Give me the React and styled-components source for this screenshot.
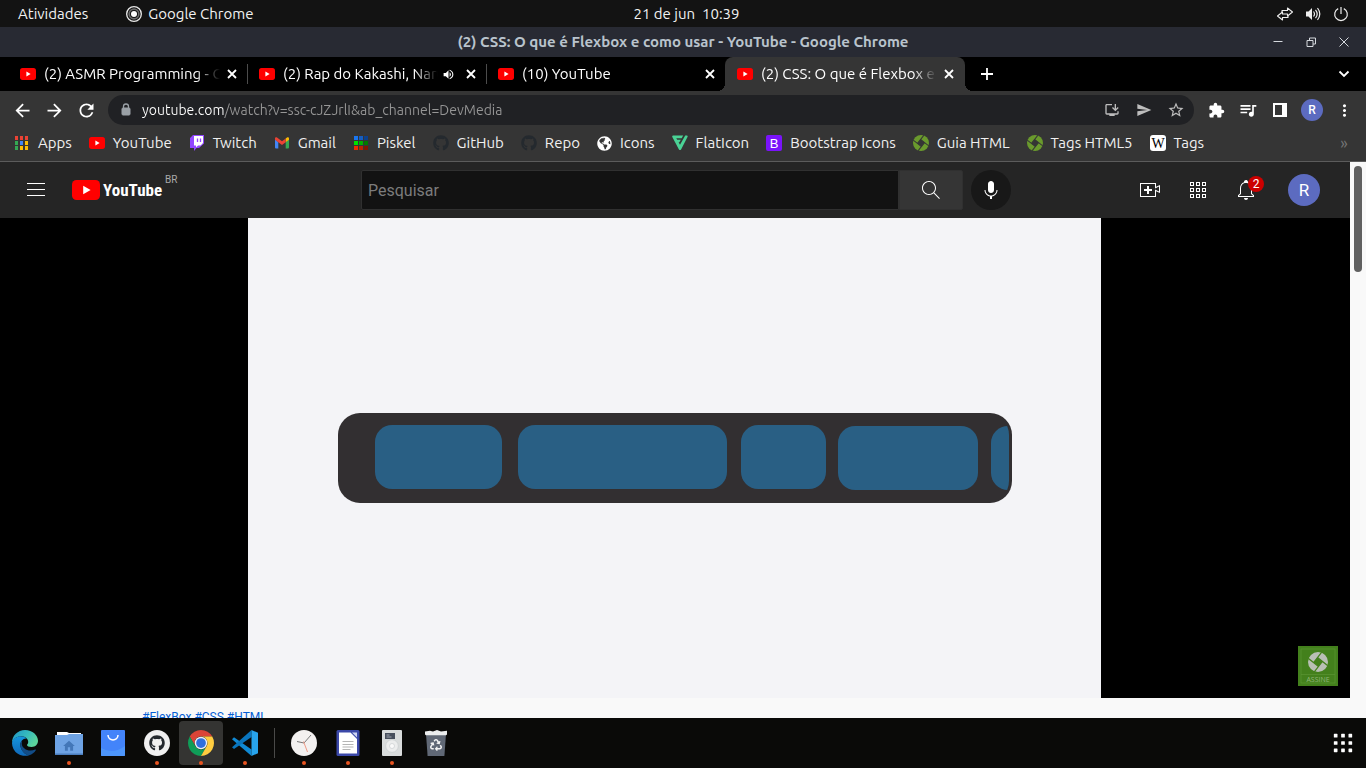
import React from "react";
import styled, { createGlobalStyle, css } from "styled-components";
import { FaGithub, FaGlobeAmericas, FaRecycle } from "react-icons/fa";
import {
  MdArrowBack, MdArrowForward, MdRefresh, MdSend, MdStarOutline,
  MdExtension, MdQueueMusic, MdMoreVert, MdVolumeUp,
  MdInstallDesktop, MdHome,
} from "react-icons/md";

const uiFont = `"Ubuntu", "Noto Sans", "Open Sans", sans-serif`;

const GlobalStyle = createGlobalStyle`
  *, *::before, *::after { box-sizing: border-box; }
  body { margin: 0; background: #000; font-family: ${uiFont}; }
  button, input { font: inherit; color: inherit; margin: 0; }
  a { color: inherit; text-decoration: none; }
  svg { display: block; flex: none; }
`;

const Desktop = styled.div`
  height: 100vh;
  min-height: 480px;
  display: flex;
  flex-direction: column;
  overflow: hidden;
`;

const IconButton = styled.button`
  flex: none;
  display: flex;
  align-items: center;
  justify-content: center;
  width: ${(p) => p.$w || 32}px;
  height: ${(p) => p.$h || 30}px;
  padding: 0;
  border: 0;
  background: none;
  color: ${(p) => p.$color || "#fff"};
  cursor: pointer;
`;

/* ---------- system bar ---------- */

const SystemBar = styled.header`
  flex: none;
  display: grid;
  grid-template-columns: 1fr auto 1fr;
  align-items: center;
  height: 27px;
  padding: 0 11px 0 18px;
  background: #131313;
  color: #f2f2f2;
  font-size: 15px;
  line-height: 20px;
`;

const SystemLeft = styled.div`
  display: flex;
  align-items: center;
  gap: 38px;
`;

const SystemText = styled.button`
  display: flex;
  align-items: center;
  gap: 6px;
  padding: 0;
  border: 0;
  background: none;
  white-space: pre;
`;

const SystemTray = styled.div`
  display: flex;
  justify-content: flex-end;
`;

const TitleBar = styled.div`
  flex: none;
  display: grid;
  grid-template-columns: 1fr auto 1fr;
  align-items: center;
  height: 30px;
  padding: 0 6px;
  background: #282a33;
  color: #b9c3cc;
`;

const WindowTitle = styled.h1`
  grid-column: 2;
  margin: 0;
  font-size: 15px;
  line-height: 20px;
  font-weight: 700;
  white-space: nowrap;
`;

const WindowButtons = styled.div`
  display: flex;
  justify-content: flex-end;
`;

/* ---------- browser chrome ---------- */

const TabStrip = styled.nav`
  flex: none;
  display: flex;
  align-items: center;
  height: 34px;
  padding: 0 6px 0 8px;
  background: #000;
`;

const TabItem = styled.div`
  position: relative;
  flex: 0 1 ${(p) => (p.$active ? 240 : 239)}px;
  min-width: 0;
  display: flex;
  align-items: center;
  gap: 8px;
  height: 34px;
  padding: 0 7px 0 12px;
  color: #fff;
  ${(p) => p.$divider && css`
    &::after {
      content: "";
      position: absolute;
      right: -1px;
      top: 7px;
      width: 1px;
      height: 20px;
      background: #4c4c4c;
    }
  `}
  ${(p) => p.$active && css`
    padding-right: 8px;
    background: #353535;
    border-radius: 8px 8px 0 0;
    &::before, &::after {
      content: "";
      position: absolute;
      bottom: 0;
      width: 8px;
      height: 8px;
    }
    &::before {
      right: 100%;
      background: radial-gradient(circle at 0 0, transparent 8px, #353535 8px);
    }
    &::after {
      left: 100%;
      background: radial-gradient(circle at 100% 0, transparent 8px, #353535 8px);
    }
  `}
`;

const TabLabel = styled.a`
  flex: 1;
  min-width: 0;
  margin-right: -4px;
  overflow: hidden;
  white-space: nowrap;
  font-size: 15px;
  line-height: 20px;
  mask-image: linear-gradient(90deg, #000 calc(100% - 24px), transparent);
`;

const Spacer = styled.div`
  flex: 1;
`;

const Toolbar = styled.div`
  flex: none;
  display: flex;
  align-items: center;
  height: 38px;
  padding: 0 6px;
  background: #353535;
`;

const Omnibox = styled.form`
  flex: 1;
  min-width: 0;
  display: flex;
  align-items: center;
  height: 30px;
  margin: 0 6px;
  padding: 0 2px 0 13px;
  border-radius: 15px;
  background: #202124;
`;

const UrlLock = styled.span`
  display: flex;
  width: 21px;
`;

const UrlInput = styled.input`
  flex: 1;
  min-width: 0;
  padding: 0;
  border: 0;
  outline: 0;
  font-size: 14px;
  line-height: 20px;
  color: transparent;
  background: linear-gradient(90deg, #fff 82px, #969696 82px);
  background-clip: text;
  -webkit-background-clip: text;
`;

const ProfileDot = styled.span`
  display: flex;
  align-items: center;
  justify-content: center;
  width: 22px;
  height: 22px;
  border-radius: 50%;
  background: #5c6bc0;
  color: #fff;
  font: 500 12px/22px Roboto, sans-serif;
`;

const BookmarkBar = styled.nav`
  flex: none;
  display: flex;
  align-items: center;
  gap: 17px;
  height: 33px;
  padding: 0 6px 4px 14px;
  background: #353535;
  border-bottom: 1px solid #5c5c5c;
`;

const Bookmark = styled.a`
  flex: none;
  display: flex;
  align-items: center;
  gap: 8px;
  color: #f0f0f0;
  font-size: 15px;
  line-height: 20px;
  white-space: nowrap;
`;

/* ---------- page ---------- */

const Viewport = styled.div`
  flex: 1;
  min-height: 0;
  display: flex;
  background: #f9f9f9;
`;

const Page = styled.div`
  flex: 1;
  min-width: 0;
  overflow: hidden;
`;

const ScrollTrack = styled.div`
  flex: none;
  width: 16px;
  padding: 4px;
  background: #f9f9f9;
`;

const ScrollThumb = styled.div`
  height: 106px;
  border-radius: 4px;
  background: #606060;
`;

const Masthead = styled.header`
  display: flex;
  align-items: center;
  height: 56px;
  padding: 0 16px;
  background: #252525;
  font-family: Roboto, sans-serif;
`;

const MastStart = styled.div`
  flex: 1 0 0;
  display: flex;
  align-items: center;
  gap: 16px;
`;

const Logo = styled.a`
  display: flex;
  align-items: center;
  gap: 3px;
  color: #fff;
`;

const Wordmark = styled.span`
  font-family: "Liberation Sans Narrow", "Roboto Condensed", "Liberation Sans", sans-serif;
  font-size: 17px;
  line-height: 20px;
  font-weight: 700;
`;

const Country = styled.span`
  align-self: flex-start;
  margin-top: -6px;
  font-size: 10px;
  line-height: 12px;
  color: #aaa;
`;

const Search = styled.form`
  flex: 0 1 650px;
  min-width: 0;
  display: flex;
  margin-left: 36px;
`;

const SearchInput = styled.input`
  flex: 1;
  min-width: 0;
  height: 40px;
  padding: 0 6px;
  border: 1px solid #303030;
  border-radius: 2px 0 0 2px;
  outline: 0;
  background: #121212;
  color: #fff;
  font-size: 16px;
  &::placeholder { color: #7c7c7c; }
`;

const SearchButton = styled(IconButton)`
  width: 64px;
  height: 40px;
  background: #353535;
  border: 1px solid #303030;
  border-radius: 0 2px 2px 0;
`;

const MicButton = styled(IconButton)`
  width: 40px;
  height: 40px;
  margin-left: 8px;
  border-radius: 50%;
  background: #181818;
`;

const MastEnd = styled.div`
  flex: 1 0 0;
  display: flex;
  align-items: center;
  justify-content: flex-end;
  gap: 8px;
  padding-right: 14px;
`;

const BellButton = styled(IconButton)`
  position: relative;
  margin-right: 14px;
`;

const Badge = styled.span`
  position: absolute;
  top: 6px;
  right: 2px;
  width: 16px;
  height: 16px;
  border-radius: 50%;
  background: #c00;
  color: #fff;
  font: 12px/16px Roboto, sans-serif;
  text-align: center;
`;

const Avatar = styled.button`
  width: 32px;
  height: 32px;
  padding: 0;
  border: 0;
  border-radius: 50%;
  background: #5c6bc0;
  color: #fff;
  font-size: 17px;
  line-height: 32px;
`;

const Player = styled.main`
  position: relative;
  display: flex;
  justify-content: center;
  height: 480px;
  padding-right: 1px;
  background: #000;
`;

const Frame = styled.svg`
  height: 100%;
  width: auto;
  max-width: 100%;
  background: #f4f4f7;
`;

const Subscribe = styled.button`
  position: absolute;
  right: 12px;
  bottom: 12px;
  width: 40px;
  height: 40px;
  padding: 0;
  border: 0;
  background: #43801c;
`;

const Hashtags = styled.p`
  display: flex;
  gap: 3px;
  margin: 0;
  padding: 10px 0 0 142px;
  font: 12px/18px Roboto, sans-serif;
  color: #065fd4;
`;

/* ---------- dock ---------- */

const Dock = styled.footer`
  flex: none;
  display: flex;
  align-items: center;
  height: 50px;
  padding: 0 1px 0 3px;
  background: #0a0a08;
`;

const DockItem = styled.button`
  position: relative;
  flex: none;
  display: flex;
  align-items: center;
  justify-content: center;
  width: 44px;
  height: 44px;
  padding: 0;
  border: 0;
  border-radius: 4px;
  background: ${(p) => (p.$active ? "#343432" : "none")};
  ${(p) => p.$running && css`
    &::after {
      content: "";
      position: absolute;
      left: 20px;
      bottom: 0;
      width: 4px;
      height: 4px;
      border-radius: 50%;
      background: #e95420;
    }
  `}
`;

const DockDivider = styled.div`
  width: 1px;
  height: 30px;
  margin: 0 7px;
  background: #4a4a48;
`;

/* ---------- drawings ---------- */

const YouTubeMark = ({ width = 16, height = 12 }) => (
  <svg width={width} height={height} viewBox="0 0 28 20" preserveAspectRatio="none">
    <rect width="28" height="20" rx="4.5" fill="#f00" />
    <path d="M11.2 5.8 18.6 10l-7.4 4.2z" fill="#fff" />
  </svg>
);

const ChromeMark = ({ size = 26, mono }) => (
  <svg width={size} height={size} viewBox="0 0 48 48">
    {mono ? (
      <g fill="none" stroke="#e8e8e8">
        <circle cx="24" cy="24" r="22" strokeWidth="4" />
        <circle cx="24" cy="24" r="14.5" strokeWidth="5" stroke="#6a6a6a" />
        <circle cx="24" cy="24" r="9" fill="#fff" stroke="none" />
      </g>
    ) : (
      <g>
        <path d="M24 12h20.78A24 24 0 0 0 3.22 12L13.61 30A12 12 0 0 1 24 12z" fill="#db4437" />
        <path d="M34.39 30 24 48A24 24 0 0 1 3.22 12L13.61 30A12 12 0 0 0 34.39 30z" fill="#0f9d58" />
        <path d="M44.78 12A24 24 0 0 1 24 48L34.39 30A12 12 0 0 0 24 12z" fill="#ffcd40" />
        <circle cx="24" cy="24" r="11.5" fill="#f1f1f1" />
        <circle cx="24" cy="24" r="9" fill="#2f6fdc" />
      </g>
    )}
  </svg>
);

const DevMediaMark = ({ size = 16, color = "#6a9a2d", gap = "#353535", ...rest }) => (
  <svg width={size} height={size} viewBox="0 0 16 16" {...rest}>
    <circle cx="8" cy="8" r="8" fill={color} />
    <g transform="rotate(38 8 8)">
      <rect x="5.5" y="5.5" width="5" height="5" fill={gap} />
      <path d="M5.5 10.5V0M5.5 5.5H16M10.5 5.5V16M10.5 10.5H0" stroke={gap} strokeWidth="1" />
    </g>
  </svg>
);

const AppsMark = () => {
  const colors = ["#ea4335", "#ea4335", "#ea4335", "#34a853", "#4285f4", "#fbbc04", "#34a853", "#fbbc04", "#fbbc04"];
  return (
    <svg width="16" height="16" viewBox="0 0 16 16">
      {colors.map((c, i) => (
        <rect key={i} x={1 + (i % 3) * 5} y={1 + Math.floor(i / 3) * 5} width="3" height="4" fill={c} />
      ))}
    </svg>
  );
};

const PiskelMark = () => {
  const colors = ["#1a76f0", "#155dc0", "#0d408a", "#00e000", "#00b000", "#007a00", "#f02a00", "#b82000", "#801600"];
  return (
    <svg width="16" height="16" viewBox="0 0 16 16">
      {colors.map((c, i) => (
        <rect key={i} x={1 + (i % 3) * 5} y={1 + Math.floor(i / 3) * 5} width="4" height="4" fill={c} />
      ))}
    </svg>
  );
};

const TwitchMark = () => (
  <svg width="16" height="16" viewBox="0 0 16 16">
    <path d="M4 0h11v8.5L10 13H7.5L5 16v-3H1V3z" fill="#9146ff" />
    <path d="M5 1h9v7l-2.5 2.5H9L7 12.5v-2H5z" fill="#fff" />
    <path d="M8.5 3.5v3.5M11.5 3.5v3.5" stroke="#9146ff" strokeWidth="1.3" />
  </svg>
);

const GmailMark = () => (
  <svg width="16" height="16" viewBox="0 0 16 16">
    <path d="M1 4.5 4.3 7v6.5H2a1 1 0 0 1-1-1z" fill="#4285f4" />
    <path d="M15 4.5 11.7 7v6.5H14a1 1 0 0 0 1-1z" fill="#34a853" />
    <path d="M11.7 3.5 13 2.5c.9-.6 2 0 2 1v1.3L11.7 7.3z" fill="#fbbc04" />
    <path d="M1 4.8V3.5c0-1 1.1-1.6 2-1L8 6.3l3.7-2.8v3.8L8 10 4.3 7.3z" fill="#ea4335" />
  </svg>
);

const FlaticonMark = () => (
  <svg width="16" height="16" viewBox="0 0 16 16" fill="#4ad295">
    <path d="M1.2.5h10L9.7 3.2H4.3l.9 1.6h3.6L7.4 7.3H6.6L8 9.8 13.2.5h1.6q1.3.1.7 1.4L9.2 14.2q-1.2 1.7-2.4 0L.3 2Q-.2.7 1.2.5z" />
  </svg>
);

const BootstrapMark = () => (
  <svg width="16" height="16" viewBox="0 0 16 16">
    <rect width="16" height="16" rx="2" fill="#7a13fa" />
    <text x="8" y="12.5" textAnchor="middle" fontFamily="Liberation Sans, sans-serif" fontSize="13" fill="#fff">B</text>
  </svg>
);

const WikiMark = () => (
  <svg width="16" height="16" viewBox="0 0 16 16">
    <rect width="16" height="16" rx="3" fill="#fff" />
    <text x="8" y="13" textAnchor="middle" fontFamily="Liberation Serif, serif" fontSize="14" fill="#000">W</text>
  </svg>
);

const LockMark = () => (
  <svg width="10" height="14" viewBox="0 0 10 14">
    <rect x="1" y="5" width="8" height="7" rx="1" fill="#9aa0a6" stroke="#9aa0a6" />
    <path d="M2.5 6V3.5a2.5 2.5 0 0 1 5 0V6" fill="none" stroke="#9aa0a6" strokeWidth="1.3" />
  </svg>
);

const lineGlyphs = {
  cross: "M4 4l8 8M12 4l-8 8",
  plus: "M8 2v12M2 8h12",
  chevron: "M3.5 5.5 8 10l4.5-4.5",
};

const LineGlyph = ({ name, size = 16 }) => (
  <svg width={size} height={size} viewBox="0 0 16 16" fill="none" stroke="#fff" strokeWidth="1.8">
    <path d={lineGlyphs[name]} />
  </svg>
);

const GlyphPath = ({ d, size = 24 }) => (
  <svg width={size} height={size} viewBox="0 0 24 24" fill="#fff"><path d={d} /></svg>
);

const glyphs = {
  menu: "M21,6H3V5h18V6z M21,11H3v1h18V11z M21,17H3v1h18V17z",
  search: "M20.87,20.17l-5.59-5.59C16.35,13.35,17,11.75,17,10c0-3.87-3.13-7-7-7s-7,3.13-7,7s3.13,7,7,7c1.75,0,3.35-0.65,4.58-1.71l5.59,5.59L20.87,20.17z M10,16c-3.31,0-6-2.69-6-6s2.69-6,6-6s6,2.69,6,6S13.31,16,10,16z",
  mic: "M12 3C10.34 3 9 4.37 9 6.07V11.93C9 13.63 10.34 15 12 15C13.66 15 15 13.63 15 11.93V6.07C15 4.37 13.66 3 12 3ZM18.5 12H17.5C17.5 15.03 15.03 17.5 12 17.5C8.97 17.5 6.5 15.03 6.5 12H5.5C5.5 15.24 7.89 17.93 11 18.41V21H13V18.41C16.11 17.93 18.5 15.24 18.5 12Z",
  create: "M14,13h-3v3H9v-3H6v-2h3V8h2v3h3V13z M17,6H3v12h14v-6.39l4,1.83V8.56l-4,1.83V6 M18,5v3.83L22,7v8l-4-1.83V19H2V5H18L18,5z",
  bell: "M10,20h4c0,1.1-0.9,2-2,2S10,21.1,10,20z M20,17.35V19H4v-1.65l2-1.88v-5.15c0-2.92,1.56-5.22,4-5.98V3.96c0-1.42,1.49-2.5,2.99-1.76C13.64,2.52,14,3.23,14,3.96l0,0.39c2.44,0.75,4,3.06,4,5.98v5.15L20,17.35z M19,17.77l-2-1.88v-5.47c0-2.47-1.19-4.36-3.13-5.1c-1.26-0.53-2.64-0.5-3.84,0.03C8.15,6.11,7,7.99,7,10.42v5.47l-2,1.88V18h14V17.77z",
};

const AppGrid = ({ size = 24, filled }) => (
  <svg width={size} height={size} viewBox="0 0 24 24">
    {[0, 1, 2, 3, 4, 5, 6, 7, 8].map((i) => {
      const col = i % 3;
      const row = Math.floor(i / 3);
      return filled ? (
        <rect key={i} x={2 + col * 8} y={2 + row * 8} width="4" height="4" rx=".6" fill="#fff" />
      ) : (
        <rect key={i} x={4.5 + col * 6} y={4.5 + row * 6} width="3" height="3" fill="none" stroke="#fff" />
      );
    })}
  </svg>
);

const SwapArrows = () => (
  <svg width="16" height="16" viewBox="0 0 16 16" fill="none" stroke="#eee" strokeWidth="1.1" strokeLinejoin="round">
    <path d="M5 6.5V4.5h5.5V2l5 4-5 4V8H8" />
    <path d="M11 9.5v2H5.5V14l-5-4 5-4v2H8" />
  </svg>
);

const Speaker = () => (
  <svg width="16" height="16" viewBox="0 0 16 16" fill="none" stroke="#eee">
    <path d="M1 5.500h2.500L7 2v12l-3.500-3.500H1z" fill="#eee" stroke="none" />
    <path d="M8.500 5.500q2 2.500 0 5M10.500 3.800q3.400 4.200 0 8.400M12.500 2q4.600 6 0 12" strokeWidth="1.2" />
  </svg>
);

const Power = () => (
  <svg width="16" height="16" viewBox="0 0 16 16" fill="none" stroke="#eee" strokeWidth="1.2">
    <path d="M8 1v7M5.2 2.6a6.3 6.3 0 1 0 5.6 0" />
  </svg>
);

const windowGlyphs = {
  minimize: "M3.5 7.5h9",
  restore: "M4 6.5h6v6H4zM6.5 6.5V4h6v6H10",
  close: "M3.5 3.5l9 9M12.5 3.5l-9 9",
};

const SidePanel = () => (
  <svg width="14" height="14" viewBox="0 0 14 14">
    <path d="M0 0h14v14H0zM2 2v10h7V2z" fill="#fff" fillRule="evenodd" />
  </svg>
);

const Edge = () => (
  <svg width="26" height="26" viewBox="0 0 26 26">
    <defs>
      <linearGradient id="edgeTop" x1="0" y1="0" x2="1" y2=".5">
        <stop offset="0" stopColor="#1f93c9" /><stop offset=".55" stopColor="#35b9bd" /><stop offset="1" stopColor="#5bd49b" />
      </linearGradient>
      <linearGradient id="edgeSide" x1="0" y1="0" x2="0" y2="1">
        <stop offset="0" stopColor="#1595dd" /><stop offset="1" stopColor="#0f67b8" />
      </linearGradient>
    </defs>
    <path d="M0 13C0 5.5 5.8 0 13 0c7.5 0 13 5.2 13 10.7 0 3.6-2.6 6.2-6.3 6.2-3 0-4.7-1-4.7-2 0-.6 1.2-1.2 1.2-3 0-2.7-2.7-5.6-6.8-5.6C4.7 6.3 1.3 8.8 0 13z" fill="url(#edgeTop)" />
    <path d="M0 13C.8 8.4 5 6.3 8.6 6.3c2.7 0 4.8.9 6 2.3-3.600-.4-6.200 2.800-6.200 6.200 0 5.200 4 9.600 8.700 10.400A13 13 0 0 1 0 13z" fill="url(#edgeSide)" />
    <path d="M10.5 9.9c-1.5 1.4-2.1 3.2-2.1 4.9 0 5.6 4.9 10.7 8.9 10.4 2.8-.8 5-2.7 6.5-5 .4-.7-.1-.9-.7-.6-6 2.8-13.1-.6-13.3-5.8-.1-1.5.2-2.9.7-3.9z" fill="#124c86" />
  </svg>
);

const Files = () => (
  <svg width="28" height="26" viewBox="0 0 28 26">
    <path d="M2 2h10l2 1h12v5H2z" fill="#fff" />
    <path d="M0 5h12l2-1h14v20.5H0z" fill="#6ea3e4" />
    <path d="M0 23.5h28v1.5H0z" fill="#4a7dbd" />
    <MdHome x="7" y="9" size={14} color="#4377b8" />
  </svg>
);

const Software = () => (
  <svg width="24" height="26" viewBox="0 0 24 26">
    <rect width="24" height="26" rx="1" fill="#4384fa" />
    <path d="M0 18q12 7 24-2v9a1 1 0 0 1-1 1H1a1 1 0 0 1-1-1z" fill="#4d96fb" />
    <path d="M7 5c0 6.5 10 6.5 10 0" fill="none" stroke="#fff" strokeWidth="1.5" />
  </svg>
);

const GithubApp = () => (
  <svg width="26" height="26" viewBox="0 0 26 26">
    <circle cx="13" cy="13" r="13" fill="#f0f0f0" />
    <FaGithub x="5" y="5" size={16} color="#24292e" />
  </svg>
);

const VsCode = () => (
  <svg width="26" height="26" viewBox="0 0 26 26">
    <path d="M2 7.3 0 9.2 19.5 26v-6.5z" fill="#1089d3" />
    <path d="M19.5 0v7L2 19 0 17.2z" fill="#0a75bd" />
    <path d="M19.5 0 26 2.8v20.4L19.5 26z" fill="#28a4ec" />
  </svg>
);

const Clock = () => (
  <svg width="26" height="26" viewBox="0 0 26 26">
    <circle cx="13" cy="13" r="13" fill="#f3f1f0" />
    <path d="M13 13 20 5" stroke="#7a7a7a" />
    <path d="M13 13 6 11.5" stroke="#777" />
    <path d="M12.5 11.5 16.5 22" stroke="#ef9a86" />
  </svg>
);

const Writer = () => (
  <svg width="24" height="26" viewBox="0 0 24 26">
    <rect x=".5" width="23" height="26" rx="1.5" fill="#3b48a8" />
    <path d="M3 2.5h11.5L21 9v14.5H3z" fill="#fff" />
    <path d="M16 2.5h5v5z" fill="#cfd5f2" />
    <path d="M6.5 11.5h11M6.5 14.5h11M6.5 17h11M6.5 19.5h8" stroke="#b5b5b5" />
  </svg>
);

const MusicPlayer = () => (
  <svg width="20" height="26" viewBox="0 0 20 26">
    <rect width="20" height="26" rx="1" fill="#d9dcdc" />
    <rect x="3" y="3" width="10" height="6" fill="#474f5c" />
    <path d="M4.5 5h3M4.5 7h5" stroke="#b7bdc6" strokeWidth=".8" />
    <circle cx="10" cy="16" r="6.3" fill="#eceded" stroke="#c3c7c9" strokeWidth=".6" />
    <circle cx="10" cy="16" r="2.5" fill="#fafafa" stroke="#c3c7c9" strokeWidth=".6" />
  </svg>
);

const Trash = () => (
  <svg width="22" height="26" viewBox="0 0 22 26">
    <path d="M1 4h20l-1.6 22H2.6z" fill="#606875" />
    <path d="M0 1.5 5 .8 8 1.5 12 0l4 1.5 6-.7V4.5l-1 .8H1l-1-.8z" fill="#eceeee" />
    <FaRecycle x="5" y="9" size={12} color="#f3f3f3" />
  </svg>
);

/* ---------- data ---------- */

const tabs = [
  { title: "(2) ASMR Programming - Coding", divider: true },
  { title: "(2) Rap do Kakashi, Naruto", divider: true, audio: true },
  { title: "(10) YouTube" },
  { title: "(2) CSS: O que é Flexbox e como usar", active: true },
];

const bookmarks = [
  ["Apps", <AppsMark />],
  ["YouTube", <YouTubeMark />],
  ["Twitch", <TwitchMark />],
  ["Gmail", <GmailMark />],
  ["Piskel", <PiskelMark />],
  ["GitHub", <FaGithub size={16} color="#24292e" />],
  ["Repo", <FaGithub size={16} color="#24292e" />],
  ["Icons", <FaGlobeAmericas size={15} color="#fff" />],
  ["FlatIcon", <FlaticonMark />],
  ["Bootstrap Icons", <BootstrapMark />],
  ["Guia HTML", <DevMediaMark />],
  ["Tags HTML5", <DevMediaMark />],
  ["Tags", <WikiMark />],
];

const dockApps = [
  { name: "Edge", icon: <Edge /> },
  { name: "Arquivos", icon: <Files />, running: true },
  { name: "Loja", icon: <Software /> },
  { name: "GitHub Desktop", icon: <GithubApp />, running: true },
  { name: "Google Chrome", icon: <ChromeMark />, running: true, active: true },
  { name: "Visual Studio Code", icon: <VsCode />, running: true },
  { divider: true },
  { name: "Relógio", icon: <Clock />, running: true },
  { name: "Writer", icon: <Writer />, running: true },
  { name: "Rhythmbox", icon: <MusicPlayer />, running: true },
  { name: "Lixeira", icon: <Trash /> },
];

const FlexboxFrame = () => (
  <Frame viewBox="0 0 853 480" role="img" aria-label="Flexbox">
    <defs>
      <clipPath id="flexContainer"><rect x="90" y="195" width="671" height="90" rx="22" /></clipPath>
    </defs>
    <rect x="90" y="195" width="674" height="90" rx="22" fill="#322f31" />
    <g fill="#295f84" clipPath="url(#flexContainer)">
      <rect x="127" y="207" width="127" height="64" rx="17" />
      <rect x="270" y="207" width="209" height="64" rx="17" />
      <rect x="493" y="207" width="85" height="64" rx="17" />
      <rect x="590" y="208" width="140" height="64" rx="17" />
      <rect x="743" y="208" width="80" height="64" rx="17" />
    </g>
  </Frame>
);

export default function App() {
  return (
    <Desktop>
      <GlobalStyle />
      <SystemBar>
        <SystemLeft>
          <SystemText>Atividades</SystemText>
          <SystemText><ChromeMark size={16} mono />Google Chrome</SystemText>
        </SystemLeft>
        <SystemText>21 de jun  10:39</SystemText>
        <SystemTray>
          <IconButton $w={28} $h={26} aria-label="Rede"><SwapArrows /></IconButton>
          <IconButton $w={28} $h={26} aria-label="Volume"><Speaker /></IconButton>
          <IconButton $w={28} $h={26} aria-label="Desligar"><Power /></IconButton>
        </SystemTray>
      </SystemBar>

      <TitleBar>
        <WindowTitle>(2) CSS: O que é Flexbox e como usar - YouTube - Google Chrome</WindowTitle>
        <WindowButtons>
          {Object.entries(windowGlyphs).map(([name, d]) => (
            <IconButton key={name} $w={33} aria-label={name}>
              <svg width="16" height="16" viewBox="0 0 16 16" fill="none" stroke="#d5d9de"><path d={d} /></svg>
            </IconButton>
          ))}
        </WindowButtons>
      </TitleBar>

      <TabStrip>
        {tabs.map((tab) => (
          <TabItem key={tab.title} $active={tab.active} $divider={tab.divider}>
            <YouTubeMark />
            <TabLabel href="#">{tab.title}</TabLabel>
            {tab.audio && <MdVolumeUp size={13} />}
            <IconButton $w={16} $h={16} aria-label="Fechar guia"><LineGlyph name="cross" /></IconButton>
          </TabItem>
        ))}
        <IconButton $w={44} aria-label="Nova guia"><LineGlyph name="plus" /></IconButton>
        <Spacer />
        <IconButton aria-label="Pesquisar guias"><LineGlyph name="chevron" /></IconButton>
      </TabStrip>

      <Toolbar>
        <IconButton aria-label="Voltar"><MdArrowBack size={21} /></IconButton>
        <IconButton aria-label="Avançar"><MdArrowForward size={21} /></IconButton>
        <IconButton aria-label="Recarregar"><MdRefresh size={21} /></IconButton>
        <Omnibox>
          <UrlLock><LockMark /></UrlLock>
          <UrlInput aria-label="Endereço" defaultValue="youtube.com/watch?v=ssc-cJZJrlI&ab_channel=DevMedia" />
          <IconButton type="button" $color="#bdbdbd" aria-label="Instalar"><MdInstallDesktop size={16} /></IconButton>
          <IconButton type="button" $color="#bdbdbd" aria-label="Enviar"><MdSend size={16} /></IconButton>
          <IconButton type="button" $color="#bdbdbd" aria-label="Favoritar"><MdStarOutline size={18} /></IconButton>
        </Omnibox>
        <IconButton aria-label="Extensões"><MdExtension size={17} /></IconButton>
        <IconButton aria-label="Mídia"><MdQueueMusic size={20} /></IconButton>
        <IconButton aria-label="Painel lateral"><SidePanel /></IconButton>
        <IconButton aria-label="Perfil"><ProfileDot>R</ProfileDot></IconButton>
        <IconButton aria-label="Menu"><MdMoreVert size={19} /></IconButton>
      </Toolbar>

      <BookmarkBar>
        {bookmarks.map(([label, icon]) => (
          <Bookmark key={label} href="#">{icon}{label}</Bookmark>
        ))}
        <Spacer />
        <IconButton $h={20} $color="#777" aria-label="Mais favoritos">»</IconButton>
      </BookmarkBar>

      <Viewport>
        <Page>
          <Masthead>
            <MastStart>
              <IconButton $w={40} $h={40} aria-label="Guia"><GlyphPath d={glyphs.menu} /></IconButton>
              <Logo href="#">
                <YouTubeMark width={28} height={20} />
                <Wordmark>YouTube</Wordmark>
                <Country>BR</Country>
              </Logo>
            </MastStart>
            <Search role="search">
              <SearchInput placeholder="Pesquisar" aria-label="Pesquisar" />
              <SearchButton type="button" aria-label="Pesquisar"><GlyphPath d={glyphs.search} /></SearchButton>
              <MicButton type="button" aria-label="Pesquisar por voz"><GlyphPath d={glyphs.mic} /></MicButton>
            </Search>
            <MastEnd>
              <IconButton $w={40} $h={40} aria-label="Criar"><GlyphPath d={glyphs.create} /></IconButton>
              <IconButton $w={40} $h={40} aria-label="Apps"><AppGrid /></IconButton>
              <BellButton $w={40} $h={40} aria-label="Notificações">
                <GlyphPath d={glyphs.bell} />
                <Badge>2</Badge>
              </BellButton>
              <Avatar aria-label="Conta">R</Avatar>
            </MastEnd>
          </Masthead>
          <Player>
            <FlexboxFrame />
            <Subscribe aria-label="Assine">
              <svg width="40" height="40" viewBox="0 0 40 40">
                <rect x="3" y="3" width="34" height="34" fill="none" stroke="#5a9433" strokeWidth=".7" />
                <path d="M3 28.5h34" stroke="#5a9433" strokeWidth=".7" />
                <DevMediaMark x="10" y="6" size={20} color="#b9bfb5" gap="#43801c" />
                <text x="20" y="35.5" textAnchor="middle" fontFamily="Open Sans, sans-serif" fontSize="7" fill="#8fb577">ASSINE</text>
              </svg>
            </Subscribe>
          </Player>
          <Hashtags><a href="#">#FlexBox</a><a href="#">#CSS</a><a href="#">#HTML</a></Hashtags>
        </Page>
        <ScrollTrack><ScrollThumb /></ScrollTrack>
      </Viewport>

      <Dock>
        {dockApps.map((app, i) =>
          app.divider ? <DockDivider key={i} /> : (
            <DockItem key={app.name} $running={app.running} $active={app.active} aria-label={app.name}>{app.icon}</DockItem>
          )
        )}
        <Spacer />
        <DockItem aria-label="Mostrar aplicativos"><AppGrid size={22} filled /></DockItem>
      </Dock>
    </Desktop>
  );
}
